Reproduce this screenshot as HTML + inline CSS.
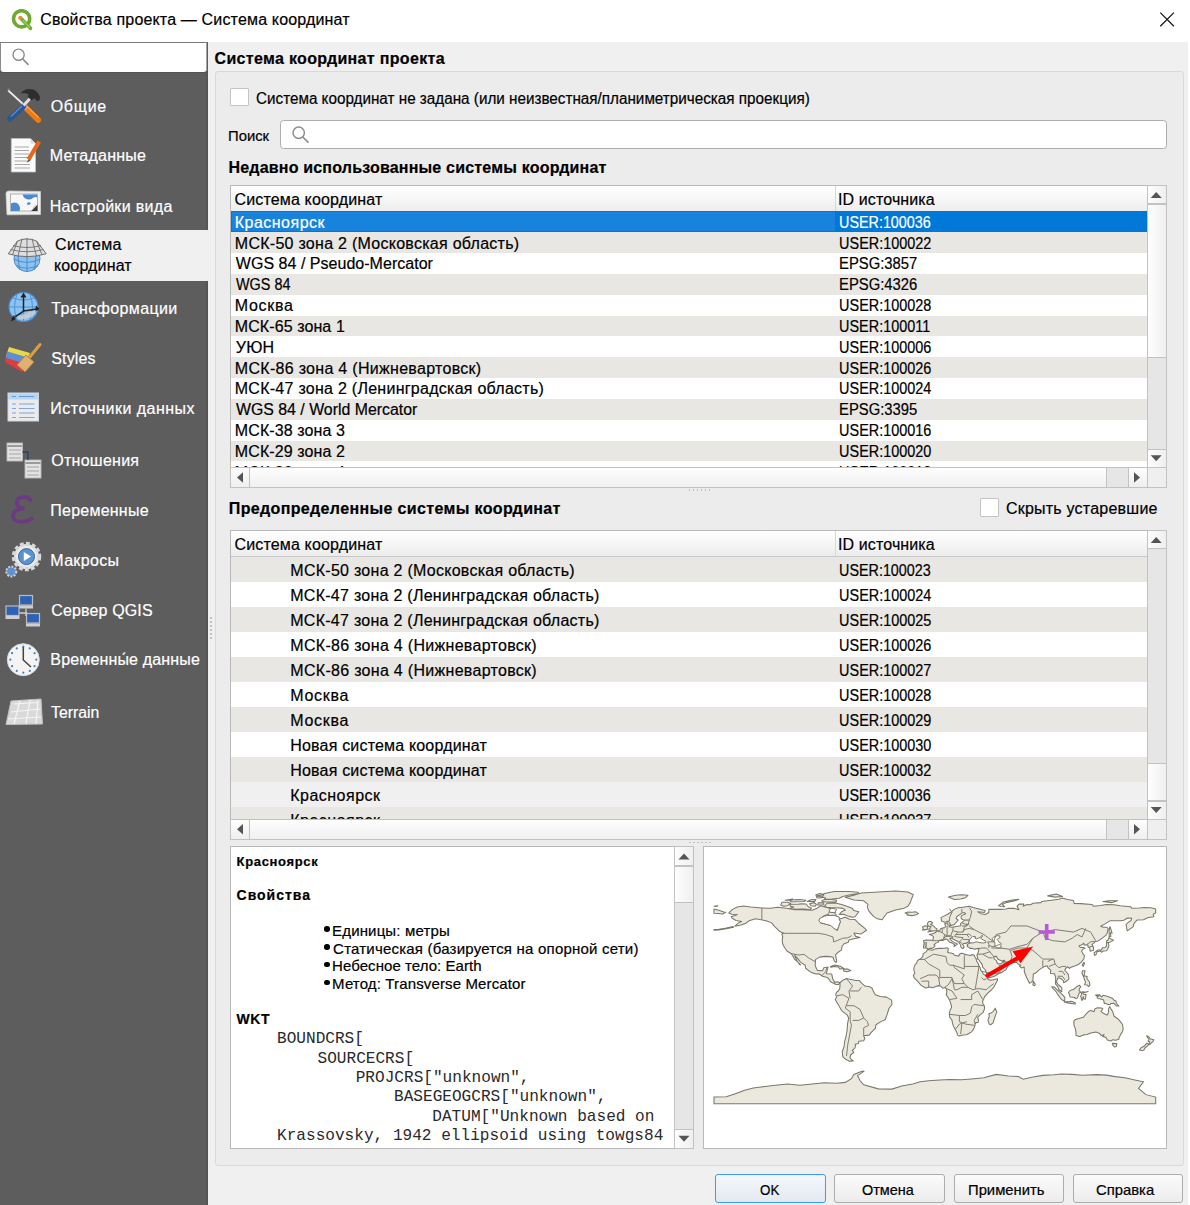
<!DOCTYPE html>
<html><head><meta charset="utf-8"><title>QGIS</title>
<style>
html,body{margin:0;padding:0;}
body{width:1190px;height:1205px;overflow:hidden;position:relative;background:#fff;font-family:"Liberation Sans",sans-serif;font-size:15px;color:#000;}
.t{position:absolute;white-space:pre;line-height:20px;font-size:16px;-webkit-text-stroke:0.2px currentColor;}
</style></head><body>
<div style="position:absolute;left:0.00px;top:0.00px;width:1190.00px;height:41.50px;background:#fff"></div><svg style="position:absolute;left:11px;top:9px" width="24" height="22" viewBox="0 0 24 22">
<circle cx="10.6" cy="9.8" r="8.1" fill="none" stroke="#6fa832" stroke-width="3.6"/>
<path d="M10.5 10 L19.5 19.3" stroke="#6fa832" stroke-width="3.6" stroke-linecap="round"/>
<path d="M12 11.5 L18.5 18.3" stroke="#9acd5a" stroke-width="1.4" stroke-linecap="round"/>
<circle cx="9.3" cy="8.9" r="2.1" fill="#f08a2c"/>
</svg><div class="t" style="left:40.30px;top:10.10px;letter-spacing:0.165px;">Свойства проекта — Система координат</div><svg style="position:absolute;left:1158px;top:11px" width="18" height="18" viewBox="0 0 18 18"><path d="M2.3 1.6 L15.9 15.2 M15.9 1.6 L2.3 15.2" stroke="#1a1a1a" stroke-width="1.3" fill="none"/></svg><div style="position:absolute;left:0.00px;top:41.50px;width:208.00px;height:1163.50px;background:#5d5d5d"></div><div style="position:absolute;left:0.00px;top:71.30px;width:207.80px;height:1.70px;background:#535353"></div><div style="position:absolute;left:0.00px;top:42.00px;width:207.00px;height:29.50px;background:#fff;border-top:1px solid #7a7a7a;border-left:1px solid #8a8a8a;border-right:1px solid #a5a5a5;border-bottom-right-radius:3px;border-bottom-left-radius:3px;box-sizing:border-box"></div><svg style="position:absolute;left:10px;top:47px" width="22" height="22" viewBox="0 0 22 22"><circle cx="8.6" cy="7.7" r="5.6" stroke="#8a8a8a" stroke-width="1.4" fill="none"/><path d="M12.6 11.8 L18 17.4" stroke="#8a8a8a" stroke-width="1.6" stroke-linecap="round"/></svg><div style="position:absolute;left:205.80px;top:71.30px;width:2.00px;height:1133.70px;background:#555"></div><div style="position:absolute;left:0.00px;top:230.00px;width:208.00px;height:50.50px;background:#f0f0f0"></div><div class="t" style="left:50.70px;top:96.60px;color:#fff;letter-spacing:0.722px;">Общие</div><div class="t" style="left:49.70px;top:146.30px;color:#fff;letter-spacing:0.219px;">Метаданные</div><div class="t" style="left:49.70px;top:196.60px;color:#fff;letter-spacing:0.310px;">Настройки вида</div><div class="t" style="left:51.30px;top:299.20px;color:#fff;letter-spacing:0.378px;">Трансформации</div><div class="t" style="left:51.30px;top:348.70px;color:#fff;letter-spacing:0.135px;">Styles</div><div class="t" style="left:50.30px;top:398.60px;color:#fff;letter-spacing:0.480px;">Источники данных</div><div class="t" style="left:51.30px;top:451.30px;color:#fff;letter-spacing:0.257px;">Отношения</div><div class="t" style="left:50.30px;top:501.10px;color:#fff;letter-spacing:0.231px;">Переменные</div><div class="t" style="left:50.30px;top:551.20px;color:#fff;letter-spacing:0.329px;">Макросы</div><div class="t" style="left:51.30px;top:600.80px;color:#fff;letter-spacing:0.134px;">Сервер QGIS</div><div class="t" style="left:50.30px;top:650.30px;color:#fff;letter-spacing:0.157px;">Временны́е данные</div><div class="t" style="left:51.30px;top:703.30px;color:#fff;transform:scaleX(0.9873);transform-origin:0.00px 0;">Terrain</div><div class="t" style="left:55.00px;top:234.70px;letter-spacing:0.336px;">Система</div><div class="t" style="left:54.00px;top:255.90px;letter-spacing:0.147px;">координат</div><svg style="position:absolute;left:0;top:0" width="60" height="740" viewBox="0 0 60 740"><path d="M8.2 90.5 L23.5 104.5" stroke="#ececec" stroke-width="1.7"/><path d="M7.6 89.8 L9.6 89" stroke="#8a8a8a" stroke-width="1.4"/><path d="M24.5 106.5 L38.2 120" stroke="#f07a10" stroke-width="5.8" stroke-linecap="round"/><path d="M26 105.5 L38.5 117.5" stroke="#ffa040" stroke-width="1.2"/><path d="M22 104 L26.5 108.5" stroke="#d0d0d0" stroke-width="3.6"/><path d="M23.5 106.5 L10 118.8" stroke="#2b5593" stroke-width="5.6" stroke-linecap="round"/><path d="M22 106 L11 116.5" stroke="#5d8fd0" stroke-width="1.3"/><path d="M23.5 105.5 L30.5 98" stroke="#e0e0e0" stroke-width="3"/><path d="M20.5 93.5 Q25 87.5 33 89.5 Q38 91 40 97 L39.5 100.5 L36.5 101 L34.5 98 L31.5 100.5 L27.5 96.5 L29 94.5 Q25 92 20.5 93.5 Z" fill="#2e2e2e"/><path d="M11.3 138.5 L30.5 138.5 L35.5 143.5 L35.5 172 L11.3 172 Z" fill="#fafafa" stroke="#bfbfbf" stroke-width="0.8"/><path d="M30.5 138.5 L30.5 143.5 L35.5 143.5" fill="#dcdcdc"/><path d="M14.5 147 L29 147" stroke="#a8a8a8" stroke-width="1"/><path d="M14.5 150.5 L29 150.5" stroke="#a8a8a8" stroke-width="1"/><path d="M14.5 154 L29 154" stroke="#a8a8a8" stroke-width="1"/><path d="M14.5 157.5 L29 157.5" stroke="#a8a8a8" stroke-width="1"/><path d="M14.5 161 L29 161" stroke="#a8a8a8" stroke-width="1"/><path d="M14.5 164.5 L30 164.5" stroke="#a8a8a8" stroke-width="1"/><path d="M14.5 168 L30 168" stroke="#a8a8a8" stroke-width="1"/><path d="M39.2 141.5 L28.5 159.5" stroke="#e8671a" stroke-width="4.2" stroke-linecap="butt"/><path d="M26.5 162.8 L28.6 159.2 L30.7 160.5 Z" fill="#555"/><path d="M6 193.5 Q6 191 9 191 L40.5 191.5 L40.5 214.5 L7 214.8 Z" fill="#eeeeee" stroke="#cfcfcf" stroke-width="0.8"/><rect x="10.5" y="194" width="27" height="17" fill="#f8f8f8" stroke="#a0a0a0" stroke-width="0.8"/><path d="M11 203.5 Q16 201 19 205 Q21 208 19.5 211 L11 211 Z" fill="#4a8ad4"/><path d="M22.5 194.5 Q24 199 28 199.5 Q31 199.8 33 198 Q35 196.5 37 197.5 L37 194.5 Z" fill="#4a8ad4"/><path d="M27 203 Q29 201.5 31 203 Q30 205.5 27.5 205 Z" fill="#4a8ad4"/><path d="M31 211 L37.5 204.5 L37.5 211 Z" fill="#3a3a3a"/><path d="M31 211 L37.5 204.5 L34 205.5 Z" fill="#d9d9d9"/><circle cx="27" cy="258.5" r="13" fill="#8cc2ee" stroke="#4a88cc" stroke-width="1"/><path d="M14 259 Q27 266 40 259 M16 265.5 Q27 271 38 265.5 M27 245 L27 271.5 M20 247 Q16.5 258 20 270 M34 247 Q37.5 258 34 270" stroke="#4f8fd4" stroke-width="1.1" fill="none"/><path d="M8.3 253.8 L17.5 241 Q27 236.8 36.5 241 L46.2 253.8 Q27 259.5 8.3 253.8 Z" fill="#dedede" stroke="#6e6e6e" stroke-width="1"/><path d="M13 245.5 Q27 249.5 41 245.5 M10.5 249.5 Q27 254 43.5 249.5 M27 238 L27 257 M22 238.8 L18 256.2 M32 238.8 L36.5 256.2 M17.5 241 L12.5 254.8 M36.5 241 L42 254.8" stroke="#6e6e6e" stroke-width="0.9" fill="none"/><circle cx="23.5" cy="307" r="14.5" fill="#8cc3ef" stroke="#4a8bd0" stroke-width="1.1"/><path d="M9 307 L38 307 M23.5 292.5 L23.5 321.5 M13 298 Q23.5 302 34 298 M13 316 Q23.5 312 34 316 M17 294.5 Q12 307 17 319.5 M30 294.5 Q35 307 30 319.5" stroke="#4f93d8" stroke-width="1" fill="none"/><path d="M23.5 295 L23.5 311 L12 319 M23.5 311 L37 309" stroke="#222" stroke-width="1.5" fill="none"/><path d="M20.5 297.5 L23.5 292.5 L26.5 297.5 Z M11 321.5 L13 315.5 L16 319 Z M36 305.5 L39.5 309 L35 311.5 Z" fill="#222"/><path d="M16 318 Q25 313 36 310 L33 316 Q24 321 16 318 Z" fill="#cfcfcf" opacity="0.85"/><path d="M9 347 L30 353 L26 362 L6 356 Z" fill="#e8d94a"/><path d="M7.5 351.5 L28 357.5 L25 364 L5.5 358 Z" fill="#5f8fd0"/><path d="M5.5 358 L25 364 L22 372 L5 362 Z" fill="#e23b3b"/><path d="M40 344.5 L29 358" stroke="#d8a040" stroke-width="3" stroke-linecap="round"/><path d="M17 365 L26 355 L34 362 L25 372 Z" fill="#e0b070" stroke="#b07c38" stroke-width="0.8"/><rect x="8" y="393" width="30.5" height="28" fill="#ebebeb" stroke="#c9d6e6" stroke-width="1"/><rect x="8.5" y="393.5" width="29.5" height="6" fill="#b5d5f3"/><path d="M12 396.5 L16 396.5 M19 396.5 L34 396.5" stroke="#6a9ad6" stroke-width="1.1"/><path d="M12 404 L16 404 M19 404 L34.5 404" stroke="#7fa7d8" stroke-width="1.1"/><path d="M12 408.5 L16 408.5 M19 408.5 L34.5 408.5" stroke="#7fa7d8" stroke-width="1.1"/><path d="M12 413 L16 413 M19 413 L34.5 413" stroke="#7fa7d8" stroke-width="1.1"/><path d="M12 417.5 L16 417.5 M19 417.5 L34.5 417.5" stroke="#7fa7d8" stroke-width="1.1"/><rect x="7" y="443" width="15.5" height="18" fill="#e2e2e2" stroke="#b9b9b9" stroke-width="0.9"/><rect x="25" y="460" width="16" height="18" fill="#e2e2e2" stroke="#b9b9b9" stroke-width="0.9"/><path d="M7.5 446 L22 446 M25.5 463 L40.5 463" stroke="#9a9a9a" stroke-width="2"/><path d="M9 450 L21 450" stroke="#a5a5a5" stroke-width="1"/><path d="M9 454 L21 454" stroke="#a5a5a5" stroke-width="1"/><path d="M9 458 L21 458" stroke="#a5a5a5" stroke-width="1"/><path d="M27 467 L39 467" stroke="#a5a5a5" stroke-width="1"/><path d="M27 471 L39 471" stroke="#a5a5a5" stroke-width="1"/><path d="M27 475 L39 475" stroke="#a5a5a5" stroke-width="1"/><path d="M22.5 452 L28 452 L28 460" stroke="#2d3f66" stroke-width="1.3" fill="none"/><path d="M30.5 499.8 C27.5 495.8 16.5 496.2 16.8 502.3 C17.1 507 21.5 508.6 24.5 508.6 C17 508.6 12.8 511.8 13 516 C13.3 522.3 23.5 524 31.5 518.8" stroke="#6b3a82" stroke-width="3.8" fill="none" stroke-linecap="round"/><circle cx="26.5" cy="556.6" r="12.5" fill="#e4e4e4" stroke="#d8d8d8" stroke-width="4.5" stroke-dasharray="3.6 2.2"/><circle cx="26.5" cy="556.6" r="10.5" fill="#ececec"/><circle cx="26.5" cy="556.6" r="8" fill="#5a93d0" stroke="#2f6aad" stroke-width="1"/><path d="M23.8 552.1 L31 556.6 L23.8 561.1 Z" fill="#fff"/><circle cx="11.3" cy="571.5" r="5" fill="#5a93d0" stroke="#d0d0d0" stroke-width="2" stroke-dasharray="2 1.3"/><rect x="19.5" y="595.5" width="13" height="9.5" fill="#2f62b5" stroke="#bcbcbc" stroke-width="1.2"/><rect x="19.0" y="605.5" width="14" height="3" fill="#cfcfcf"/><rect x="6" y="606" width="13" height="9.5" fill="#2f62b5" stroke="#bcbcbc" stroke-width="1.2"/><rect x="5.5" y="616" width="14" height="3" fill="#cfcfcf"/><rect x="26.5" y="613.5" width="13" height="9.5" fill="#2f62b5" stroke="#bcbcbc" stroke-width="1.2"/><rect x="26.0" y="623.5" width="14" height="3" fill="#cfcfcf"/><path d="M26 608.5 L26 616 M19.5 613 L27 613" stroke="#cfcfcf" stroke-width="1.3"/><circle cx="23.3" cy="659.7" r="16" fill="#f4f4f4" stroke="#d8d8d8" stroke-width="1"/><circle cx="23.30" cy="646.70" r="1.1" fill="#4a7fc4"/><circle cx="29.80" cy="648.44" r="1.1" fill="#4a7fc4"/><circle cx="34.56" cy="653.20" r="1.1" fill="#4a7fc4"/><circle cx="36.30" cy="659.70" r="1.1" fill="#4a7fc4"/><circle cx="34.56" cy="666.20" r="1.1" fill="#4a7fc4"/><circle cx="29.80" cy="670.96" r="1.1" fill="#4a7fc4"/><circle cx="23.30" cy="672.70" r="1.1" fill="#4a7fc4"/><circle cx="16.80" cy="670.96" r="1.1" fill="#4a7fc4"/><circle cx="12.04" cy="666.20" r="1.1" fill="#4a7fc4"/><circle cx="10.30" cy="659.70" r="1.1" fill="#4a7fc4"/><circle cx="12.04" cy="653.20" r="1.1" fill="#4a7fc4"/><circle cx="16.80" cy="648.44" r="1.1" fill="#4a7fc4"/><path d="M23.3 647 L23.3 660 L31 667" stroke="#444" stroke-width="1.5" fill="none"/><path d="M11 701 L41 699 L42.5 724 L6 724.5 Z" fill="#d9d9d9" stroke="#c0c0c0" stroke-width="1"/><path d="M14 704 L38 702.5 M11 712 L40 709 M8 719 L41 717 M20 700.5 L14 724 M30 700 L26 724 M38 700 L36 724" stroke="#f5f5f5" stroke-width="1.2" fill="none"/></svg><div style="position:absolute;left:208.00px;top:41.50px;width:980.00px;height:1163.50px;background:#f0f0f0"></div><div style="position:absolute;left:210.20px;top:617.00px;width:1.60px;height:1.60px;background:#c4c4c4"></div><div style="position:absolute;left:210.20px;top:621.00px;width:1.60px;height:1.60px;background:#c4c4c4"></div><div style="position:absolute;left:210.20px;top:625.00px;width:1.60px;height:1.60px;background:#c4c4c4"></div><div style="position:absolute;left:210.20px;top:629.00px;width:1.60px;height:1.60px;background:#c4c4c4"></div><div style="position:absolute;left:210.20px;top:633.00px;width:1.60px;height:1.60px;background:#c4c4c4"></div><div style="position:absolute;left:210.20px;top:637.00px;width:1.60px;height:1.60px;background:#c4c4c4"></div><div class="t" style="left:214.50px;top:48.70px;font-weight:bold;letter-spacing:0.330px;">Система координат проекта</div><div style="position:absolute;left:215.00px;top:71.00px;width:968.60px;height:1095.00px;background:#ececec;border:1px solid #d9d9d9;border-radius:3px;box-sizing:border-box"></div><div style="position:absolute;left:230.20px;top:87.60px;width:18.80px;height:18.80px;background:#fff;border:1.3px solid #c4c4c4;border-radius:1px;box-sizing:border-box"></div><div class="t" style="left:255.50px;top:88.70px;transform:scaleX(0.9526);transform-origin:0.00px 0;">Система координат не задана (или неизвестная/планиметрическая проекция)</div><div class="t" style="left:228.10px;top:126.10px;font-size:15px;transform:scaleX(0.9877);transform-origin:1.00px 0;">Поиск</div><div style="position:absolute;left:280.20px;top:119.60px;width:886.80px;height:29.80px;background:#fff;border:1.2px solid #adadad;border-radius:3.5px;box-sizing:border-box"></div><svg style="position:absolute;left:290px;top:124px" width="22" height="22" viewBox="0 0 22 22"><circle cx="8.7" cy="8.8" r="5.7" stroke="#8c8c8c" stroke-width="1.5" fill="none"/><path d="M12.8 13 L18 18.2" stroke="#8c8c8c" stroke-width="1.7" stroke-linecap="round"/></svg><div class="t" style="left:228.50px;top:157.70px;font-weight:bold;letter-spacing:0.191px;">Недавно использованные системы координат</div><div style="position:absolute;left:230.20px;top:185.00px;width:936.60px;height:302.80px;background:#fff;border:1px solid #b9b9b9;box-sizing:border-box"></div><div style="position:absolute;left:231.20px;top:186.00px;width:915.80px;height:26.50px;background:linear-gradient(180deg,#ffffff 0%,#f7f7f7 45%,#ebebeb 100%);"></div><div style="position:absolute;left:231.20px;top:211.50px;width:915.80px;height:1.00px;background:#c8c8c8"></div><div style="position:absolute;left:834.50px;top:186.00px;width:1.00px;height:25.50px;background:#d8d8d8"></div><div style="position:absolute;left:231.20px;top:211.40px;width:915.80px;height:255.90px;overflow:hidden"><div style="position:absolute;left:0.00px;top:0.00px;width:915.80px;height:20.83px;background:#0078d7"></div><div style="position:absolute;left:1.00px;top:1.00px;width:602.80px;height:18.83px;background:#1883dc"></div><div class="t" style="left:3.60px;top:1.40px;color:#fff;letter-spacing:0.476px;">Красноярск</div><div class="t" style="left:608.10px;top:1.40px;color:#fff;transform:scaleX(0.8955);transform-origin:1.00px 0;">USER:100036</div><div style="position:absolute;left:0.00px;top:20.83px;width:915.80px;height:20.83px;background:#e9e7e3"></div><div class="t" style="left:3.60px;top:22.23px;letter-spacing:0.270px;">МСК-50 зона 2 (Московская область)</div><div class="t" style="left:608.10px;top:22.23px;transform:scaleX(0.9011);transform-origin:1.00px 0;">USER:100022</div><div class="t" style="left:4.60px;top:43.07px;letter-spacing:0.027px;">WGS 84 / Pseudo-Mercator</div><div class="t" style="left:608.10px;top:43.07px;transform:scaleX(0.9247);transform-origin:1.00px 0;">EPSG:3857</div><div style="position:absolute;left:0.00px;top:62.50px;width:915.80px;height:20.83px;background:#e9e7e3"></div><div class="t" style="left:4.60px;top:63.90px;transform:scaleX(0.8999);transform-origin:0.00px 0;">WGS 84</div><div class="t" style="left:608.10px;top:63.90px;transform:scaleX(0.9247);transform-origin:1.00px 0;">EPSG:4326</div><div class="t" style="left:3.60px;top:84.73px;letter-spacing:0.695px;">Москва</div><div class="t" style="left:608.10px;top:84.73px;transform:scaleX(0.9011);transform-origin:1.00px 0;">USER:100028</div><div style="position:absolute;left:0.00px;top:104.16px;width:915.80px;height:20.83px;background:#e9e7e3"></div><div class="t" style="left:3.60px;top:105.56px;letter-spacing:0.091px;">МСК-65 зона 1</div><div class="t" style="left:608.10px;top:105.56px;transform:scaleX(0.9007);transform-origin:1.00px 0;">USER:100011</div><div class="t" style="left:4.60px;top:126.40px;letter-spacing:0.236px;">УЮН</div><div class="t" style="left:608.10px;top:126.40px;transform:scaleX(0.9011);transform-origin:1.00px 0;">USER:100006</div><div style="position:absolute;left:0.00px;top:145.83px;width:915.80px;height:20.83px;background:#e9e7e3"></div><div class="t" style="left:3.60px;top:147.23px;letter-spacing:0.298px;">МСК-86 зона 4 (Нижневартовск)</div><div class="t" style="left:608.10px;top:147.23px;transform:scaleX(0.9011);transform-origin:1.00px 0;">USER:100026</div><div class="t" style="left:3.60px;top:168.06px;letter-spacing:0.263px;">МСК-47 зона 2 (Ленинградская область)</div><div class="t" style="left:608.10px;top:168.06px;transform:scaleX(0.9011);transform-origin:1.00px 0;">USER:100024</div><div style="position:absolute;left:0.00px;top:187.50px;width:915.80px;height:20.83px;background:#e9e7e3"></div><div class="t" style="left:4.60px;top:188.90px;transform:scaleX(0.9914);transform-origin:0.00px 0;">WGS 84 / World Mercator</div><div class="t" style="left:608.10px;top:188.90px;transform:scaleX(0.9247);transform-origin:1.00px 0;">EPSG:3395</div><div class="t" style="left:3.60px;top:209.73px;letter-spacing:0.108px;">МСК-38 зона 3</div><div class="t" style="left:608.10px;top:209.73px;transform:scaleX(0.9011);transform-origin:1.00px 0;">USER:100016</div><div style="position:absolute;left:0.00px;top:229.16px;width:915.80px;height:20.83px;background:#e9e7e3"></div><div class="t" style="left:3.60px;top:230.56px;letter-spacing:0.108px;">МСК-29 зона 2</div><div class="t" style="left:608.10px;top:230.56px;transform:scaleX(0.9011);transform-origin:1.00px 0;">USER:100020</div><div class="t" style="left:3.60px;top:251.40px;letter-spacing:0.108px;">МСК-30 зона 4</div><div class="t" style="left:608.10px;top:251.40px;transform:scaleX(0.9011);transform-origin:1.00px 0;">USER:100013</div></div><div class="t" style="left:234.60px;top:190.10px;letter-spacing:0.141px;">Система координат</div><div class="t" style="left:838.00px;top:190.10px;letter-spacing:0.116px;">ID источника</div><div style="position:absolute;left:1146.50px;top:185.00px;width:20.30px;height:283.30px;background:#e6e6e6;border:1px solid #c2c2c2;box-sizing:border-box"></div><div style="position:absolute;left:1146.50px;top:185.00px;width:20.30px;height:19.00px;background:linear-gradient(90deg,#fdfdfd,#efefef);border:1px solid #c2c2c2;box-sizing:border-box"></div><div style="position:absolute;left:1146.50px;top:449.30px;width:20.30px;height:19.00px;background:linear-gradient(90deg,#fdfdfd,#efefef);border:1px solid #c2c2c2;box-sizing:border-box"></div><div style="position:absolute;left:1146.50px;top:204.30px;width:20.30px;height:154.00px;background:linear-gradient(90deg,#fefefe,#f0f0f0);border:1px solid #c2c2c2;box-sizing:border-box"></div><div style="position:absolute;left:230.20px;top:467.30px;width:917.30px;height:20.50px;background:#e6e6e6;border:1px solid #c2c2c2;box-sizing:border-box"></div><div style="position:absolute;left:230.20px;top:467.30px;width:19.50px;height:20.50px;background:linear-gradient(180deg,#fdfdfd,#efefef);border:1px solid #c2c2c2;box-sizing:border-box"></div><div style="position:absolute;left:1128.00px;top:467.30px;width:19.50px;height:20.50px;background:linear-gradient(180deg,#fdfdfd,#efefef);border:1px solid #c2c2c2;box-sizing:border-box"></div><div style="position:absolute;left:249.20px;top:467.30px;width:858.10px;height:20.50px;background:linear-gradient(180deg,#fefefe,#f0f0f0);border:1px solid #c2c2c2;box-sizing:border-box"></div><div style="position:absolute;left:1146.50px;top:467.30px;width:20.30px;height:20.50px;background:#efefef;border:1px solid #c2c2c2;box-sizing:border-box"></div><svg style="position:absolute;left:0;top:0;overflow:visible" width="1" height="1"><polygon points="1150.7,198.0 1161.7,198.0 1156.2,192.0" fill="#555"/><polygon points="1150.7,455.3 1161.7,455.3 1156.2,461.3" fill="#555"/><polygon points="243.0,472.3 243.0,482.8 237.0,477.55" fill="#555"/><polygon points="1134.0,472.3 1134.0,482.8 1140.0,477.55" fill="#555"/></svg><div style="position:absolute;left:688.70px;top:489.40px;width:1.60px;height:1.60px;background:#c0c0c0"></div><div style="position:absolute;left:692.70px;top:489.40px;width:1.60px;height:1.60px;background:#c0c0c0"></div><div style="position:absolute;left:696.70px;top:489.40px;width:1.60px;height:1.60px;background:#c0c0c0"></div><div style="position:absolute;left:700.70px;top:489.40px;width:1.60px;height:1.60px;background:#c0c0c0"></div><div style="position:absolute;left:704.70px;top:489.40px;width:1.60px;height:1.60px;background:#c0c0c0"></div><div style="position:absolute;left:708.70px;top:489.40px;width:1.60px;height:1.60px;background:#c0c0c0"></div><div class="t" style="left:228.80px;top:499.10px;font-weight:bold;letter-spacing:0.356px;">Предопределенные системы координат</div><div style="position:absolute;left:980.30px;top:498.00px;width:18.90px;height:18.70px;background:#fff;border:1.3px solid #c4c4c4;border-radius:1px;box-sizing:border-box"></div><div class="t" style="left:1005.90px;top:499.30px;letter-spacing:0.231px;">Скрыть устаревшие</div><div style="position:absolute;left:230.20px;top:530.00px;width:936.60px;height:309.50px;background:#fff;border:1px solid #b9b9b9;box-sizing:border-box"></div><div style="position:absolute;left:231.20px;top:531.00px;width:915.80px;height:26.00px;background:linear-gradient(180deg,#ffffff 0%,#f7f7f7 45%,#ebebeb 100%);"></div><div style="position:absolute;left:231.20px;top:556.00px;width:915.80px;height:1.00px;background:#c8c8c8"></div><div style="position:absolute;left:834.50px;top:531.00px;width:1.00px;height:25.00px;background:#d8d8d8"></div><div style="position:absolute;left:231.20px;top:556.80px;width:915.80px;height:262.20px;overflow:hidden"><div style="position:absolute;left:0.00px;top:0.00px;width:915.80px;height:25.00px;background:#e9e7e3"></div><div class="t" style="left:59.10px;top:4.30px;letter-spacing:0.270px;">МСК-50 зона 2 (Московская область)</div><div class="t" style="left:607.70px;top:4.30px;transform:scaleX(0.8955);transform-origin:1.00px 0;">USER:100023</div><div class="t" style="left:59.10px;top:29.30px;letter-spacing:0.263px;">МСК-47 зона 2 (Ленинградская область)</div><div class="t" style="left:607.70px;top:29.30px;transform:scaleX(0.9011);transform-origin:1.00px 0;">USER:100024</div><div style="position:absolute;left:0.00px;top:50.00px;width:915.80px;height:25.00px;background:#e9e7e3"></div><div class="t" style="left:59.10px;top:54.30px;letter-spacing:0.263px;">МСК-47 зона 2 (Ленинградская область)</div><div class="t" style="left:607.70px;top:54.30px;transform:scaleX(0.9011);transform-origin:1.00px 0;">USER:100025</div><div class="t" style="left:59.10px;top:79.30px;letter-spacing:0.298px;">МСК-86 зона 4 (Нижневартовск)</div><div class="t" style="left:607.70px;top:79.30px;transform:scaleX(0.9011);transform-origin:1.00px 0;">USER:100026</div><div style="position:absolute;left:0.00px;top:100.00px;width:915.80px;height:25.00px;background:#e9e7e3"></div><div class="t" style="left:59.10px;top:104.30px;letter-spacing:0.298px;">МСК-86 зона 4 (Нижневартовск)</div><div class="t" style="left:607.70px;top:104.30px;transform:scaleX(0.9011);transform-origin:1.00px 0;">USER:100027</div><div class="t" style="left:59.10px;top:129.30px;letter-spacing:0.695px;">Москва</div><div class="t" style="left:607.70px;top:129.30px;transform:scaleX(0.9011);transform-origin:1.00px 0;">USER:100028</div><div style="position:absolute;left:0.00px;top:150.00px;width:915.80px;height:25.00px;background:#e9e7e3"></div><div class="t" style="left:59.10px;top:154.30px;letter-spacing:0.695px;">Москва</div><div class="t" style="left:607.70px;top:154.30px;transform:scaleX(0.9011);transform-origin:1.00px 0;">USER:100029</div><div class="t" style="left:59.10px;top:179.30px;letter-spacing:0.181px;">Новая система координат</div><div class="t" style="left:607.70px;top:179.30px;transform:scaleX(0.9011);transform-origin:1.00px 0;">USER:100030</div><div style="position:absolute;left:0.00px;top:200.00px;width:915.80px;height:25.00px;background:#e9e7e3"></div><div class="t" style="left:59.10px;top:204.30px;letter-spacing:0.181px;">Новая система координат</div><div class="t" style="left:607.70px;top:204.30px;transform:scaleX(0.9011);transform-origin:1.00px 0;">USER:100032</div><div style="position:absolute;left:0.00px;top:225.00px;width:915.80px;height:25.00px;background:#f0f0f0"></div><div class="t" style="left:59.10px;top:229.30px;letter-spacing:0.476px;">Красноярск</div><div class="t" style="left:607.70px;top:229.30px;transform:scaleX(0.8955);transform-origin:1.00px 0;">USER:100036</div><div style="position:absolute;left:0.00px;top:250.00px;width:915.80px;height:25.00px;background:#e9e7e3"></div><div class="t" style="left:59.10px;top:254.30px;letter-spacing:0.476px;">Красноярск</div><div class="t" style="left:607.70px;top:254.30px;transform:scaleX(0.9011);transform-origin:1.00px 0;">USER:100037</div></div><div class="t" style="left:234.60px;top:534.60px;letter-spacing:0.141px;">Система координат</div><div class="t" style="left:838.00px;top:534.60px;letter-spacing:0.116px;">ID источника</div><div style="position:absolute;left:1146.50px;top:530.00px;width:20.30px;height:290.00px;background:#e6e6e6;border:1px solid #c2c2c2;box-sizing:border-box"></div><div style="position:absolute;left:1146.50px;top:530.00px;width:20.30px;height:19.00px;background:linear-gradient(90deg,#fdfdfd,#efefef);border:1px solid #c2c2c2;box-sizing:border-box"></div><div style="position:absolute;left:1146.50px;top:801.00px;width:20.30px;height:19.00px;background:linear-gradient(90deg,#fdfdfd,#efefef);border:1px solid #c2c2c2;box-sizing:border-box"></div><div style="position:absolute;left:1146.50px;top:762.70px;width:20.30px;height:38.10px;background:linear-gradient(90deg,#fefefe,#f0f0f0);border:1px solid #c2c2c2;box-sizing:border-box"></div><div style="position:absolute;left:230.20px;top:819.00px;width:917.30px;height:20.50px;background:#e6e6e6;border:1px solid #c2c2c2;box-sizing:border-box"></div><div style="position:absolute;left:230.20px;top:819.00px;width:19.50px;height:20.50px;background:linear-gradient(180deg,#fdfdfd,#efefef);border:1px solid #c2c2c2;box-sizing:border-box"></div><div style="position:absolute;left:1128.00px;top:819.00px;width:19.50px;height:20.50px;background:linear-gradient(180deg,#fdfdfd,#efefef);border:1px solid #c2c2c2;box-sizing:border-box"></div><div style="position:absolute;left:249.20px;top:819.00px;width:858.10px;height:20.50px;background:linear-gradient(180deg,#fefefe,#f0f0f0);border:1px solid #c2c2c2;box-sizing:border-box"></div><div style="position:absolute;left:1146.50px;top:819.00px;width:20.30px;height:20.50px;background:#efefef;border:1px solid #c2c2c2;box-sizing:border-box"></div><svg style="position:absolute;left:0;top:0;overflow:visible" width="1" height="1"><polygon points="1150.7,543.0 1161.7,543.0 1156.2,537.0" fill="#555"/><polygon points="1150.7,807.0 1161.7,807.0 1156.2,813.0" fill="#555"/><polygon points="243.0,824.0 243.0,834.5 237.0,829.25" fill="#555"/><polygon points="1134.0,824.0 1134.0,834.5 1140.0,829.25" fill="#555"/></svg><div style="position:absolute;left:689.00px;top:841.50px;width:1.50px;height:1.50px;background:#c4c4c4"></div><div style="position:absolute;left:693.00px;top:841.50px;width:1.50px;height:1.50px;background:#c4c4c4"></div><div style="position:absolute;left:697.00px;top:841.50px;width:1.50px;height:1.50px;background:#c4c4c4"></div><div style="position:absolute;left:701.00px;top:841.50px;width:1.50px;height:1.50px;background:#c4c4c4"></div><div style="position:absolute;left:705.00px;top:841.50px;width:1.50px;height:1.50px;background:#c4c4c4"></div><div style="position:absolute;left:709.00px;top:841.50px;width:1.50px;height:1.50px;background:#c4c4c4"></div><div style="position:absolute;left:230.20px;top:846.20px;width:464.00px;height:302.60px;background:#fff;border:1px solid #b9b9b9;box-sizing:border-box"></div><div style="position:absolute;left:0.00px;top:0.00px;width:1190.00px;height:1205.00px;overflow:hidden;clip-path:inset(847px 497px 57px 231px)"><div class="t" style="left:236.60px;top:852.20px;font-size:13px;font-weight:bold;letter-spacing:0.654px;">Красноярск</div><div class="t" style="left:236.60px;top:885.20px;font-size:14px;font-weight:bold;letter-spacing:0.978px;">Свойства</div><div class="t" style="left:332.10px;top:920.80px;font-size:15px;letter-spacing:0.148px;">Единицы: метры</div><div class="t" style="left:333.10px;top:938.60px;font-size:15px;letter-spacing:0.208px;">Статическая (базируется на опорной сети)</div><div class="t" style="left:332.10px;top:956.30px;font-size:15px;letter-spacing:0.060px;">Небесное тело: Earth</div><div class="t" style="left:332.10px;top:974.20px;font-size:15px;letter-spacing:0.135px;">Метод: Transverse Mercator</div><div class="t" style="left:236.50px;top:1009.20px;font-size:14px;font-weight:bold;letter-spacing:0.630px;">WKT</div><div class="t" style="left:277.00px;top:1029.11px;font-size:16.1px;color:#2a2a2a;font-family:'Liberation Mono',monospace;-webkit-text-stroke:0;">BOUNDCRS[</div><div class="t" style="left:317.50px;top:1048.51px;font-size:16.1px;color:#2a2a2a;font-family:'Liberation Mono',monospace;-webkit-text-stroke:0;">SOURCECRS[</div><div class="t" style="left:355.70px;top:1067.91px;font-size:16.1px;color:#2a2a2a;font-family:'Liberation Mono',monospace;-webkit-text-stroke:0;">PROJCRS[&quot;unknown&quot;,</div><div class="t" style="left:394.00px;top:1087.31px;font-size:16.1px;color:#2a2a2a;font-family:'Liberation Mono',monospace;-webkit-text-stroke:0;">BASEGEOGCRS[&quot;unknown&quot;,</div><div class="t" style="left:432.30px;top:1106.71px;font-size:16.1px;color:#2a2a2a;font-family:'Liberation Mono',monospace;-webkit-text-stroke:0;">DATUM[&quot;Unknown based on</div><div class="t" style="left:277.00px;top:1126.11px;font-size:16.1px;color:#2a2a2a;font-family:'Liberation Mono',monospace;-webkit-text-stroke:0;">Krassovsky, 1942 ellipsoid using towgs84</div><div style="position:absolute;left:324.30px;top:926.20px;width:5.60px;height:5.60px;background:#000;border-radius:50%"></div><div style="position:absolute;left:324.30px;top:944.00px;width:5.60px;height:5.60px;background:#000;border-radius:50%"></div><div style="position:absolute;left:324.30px;top:961.70px;width:5.60px;height:5.60px;background:#000;border-radius:50%"></div><div style="position:absolute;left:324.30px;top:979.60px;width:5.60px;height:5.60px;background:#000;border-radius:50%"></div></div><div style="position:absolute;left:673.80px;top:846.20px;width:20.40px;height:302.60px;background:#e6e6e6;border:1px solid #c2c2c2;box-sizing:border-box"></div><div style="position:absolute;left:673.80px;top:846.20px;width:20.40px;height:19.50px;background:linear-gradient(90deg,#fdfdfd,#efefef);border:1px solid #c2c2c2;box-sizing:border-box"></div><div style="position:absolute;left:673.80px;top:1129.30px;width:20.40px;height:19.50px;background:linear-gradient(90deg,#fdfdfd,#efefef);border:1px solid #c2c2c2;box-sizing:border-box"></div><div style="position:absolute;left:673.80px;top:865.60px;width:20.40px;height:37.60px;background:linear-gradient(90deg,#fefefe,#f0f0f0);border:1px solid #c2c2c2;box-sizing:border-box"></div><svg style="position:absolute;left:0;top:0;overflow:visible" width="1" height="1"><polygon points="678.5,859.5 689.5,859.5 684,853.5" fill="#555"/><polygon points="678.5,1135.8 689.5,1135.8 684,1141.8" fill="#555"/></svg><div style="position:absolute;left:702.80px;top:846.20px;width:464.40px;height:302.60px;background:#fff;border:1px solid #b9b9b9;box-sizing:border-box"></div><svg style="position:absolute;left:714.1px;top:883.4px;overflow:visible" width="441.70" height="220.85" viewBox="-180 -90 360 180" preserveAspectRatio="none"><path d="M-168.0 -65.5 L-165.0 -68.5 L-161.0 -70.5 L-156.0 -71.3 L-150.0 -70.4 L-141.0 -69.7 L-134.0 -69.5 L-128.0 -70.2 L-121.0 -69.4 L-114.0 -68.3 L-108.0 -68.3 L-100.0 -67.8 L-96.0 -69.5 L-93.0 -71.5 L-86.0 -69.5 L-82.0 -68.5 L-81.0 -66.0 L-86.0 -64.5 L-90.0 -63.5 L-94.0 -60.0 L-93.0 -57.5 L-89.0 -56.5 L-84.0 -55.2 L-82.0 -53.0 L-79.5 -51.5 L-78.5 -54.5 L-77.0 -58.5 L-78.0 -60.5 L-73.0 -62.0 L-69.5 -60.5 L-65.0 -60.2 L-62.0 -57.0 L-57.0 -53.0 L-55.7 -51.5 L-60.0 -48.5 L-66.0 -49.2 L-64.5 -46.5 L-61.0 -45.5 L-66.0 -44.5 L-70.0 -43.5 L-70.5 -41.8 L-74.0 -40.5 L-75.8 -38.0 L-76.0 -35.5 L-78.5 -33.8 L-81.0 -31.5 L-80.0 -27.0 L-80.5 -25.2 L-82.0 -26.5 L-83.0 -29.5 L-85.5 -30.0 L-89.5 -30.2 L-94.0 -29.6 L-97.3 -27.5 L-97.5 -22.5 L-95.8 -18.8 L-91.5 -18.5 L-90.5 -21.0 L-87.0 -21.5 L-88.0 -18.0 L-88.5 -16.0 L-84.0 -15.8 L-83.3 -12.0 L-81.5 -9.0 L-79.0 -9.5 L-77.3 -8.7 L-78.5 -7.3 L-80.5 -7.2 L-85.0 -9.5 L-86.0 -11.2 L-87.7 -13.0 L-91.5 -14.0 L-94.5 -16.0 L-97.0 -15.8 L-101.5 -17.5 L-105.3 -20.5 L-105.7 -23.0 L-109.5 -25.5 L-112.2 -29.0 L-114.5 -31.2 L-112.5 -27.0 L-110.3 -23.5 L-109.4 -23.2 L-112.0 -26.0 L-114.5 -28.0 L-115.7 -30.5 L-117.2 -32.6 L-120.6 -34.6 L-122.5 -37.5 L-124.0 -40.3 L-124.4 -43.0 L-124.0 -46.3 L-124.7 -48.4 L-123.0 -49.0 L-126.5 -50.5 L-130.5 -54.5 L-133.0 -57.5 L-137.0 -59.0 L-140.5 -59.8 L-146.0 -60.8 L-151.5 -59.2 L-154.0 -57.2 L-158.0 -55.8 L-163.0 -54.8 L-160.0 -57.5 L-157.5 -58.7 L-162.0 -59.5 L-165.0 -61.0 L-166.0 -62.5 L-163.0 -63.5 L-161.0 -64.4 L-165.5 -64.6 L-168.0 -65.5 Z M-73.0 -78.3 L-66.0 -80.0 L-60.0 -81.8 L-46.0 -82.6 L-32.0 -83.5 L-22.0 -82.6 L-17.5 -80.5 L-19.0 -77.0 L-20.0 -74.0 L-22.0 -71.0 L-25.0 -69.5 L-32.0 -68.0 L-39.0 -65.6 L-43.0 -60.0 L-47.0 -60.8 L-50.0 -62.8 L-52.0 -65.0 L-54.0 -67.5 L-55.0 -70.5 L-54.5 -72.5 L-58.0 -75.5 L-66.0 -76.2 L-73.0 -78.3 Z M-90.0 -71.0 L-88.0 -73.5 L-81.0 -73.7 L-76.0 -72.5 L-70.0 -70.5 L-67.5 -69.5 L-66.0 -67.5 L-62.0 -66.5 L-63.5 -64.5 L-65.0 -62.5 L-67.0 -62.0 L-70.0 -62.8 L-72.0 -63.5 L-74.5 -64.5 L-78.0 -64.3 L-76.0 -66.5 L-73.0 -68.0 L-75.0 -69.3 L-80.0 -69.8 L-85.0 -70.0 L-88.0 -70.2 Z M-90.0 -76.8 L-84.0 -77.0 L-78.0 -77.5 L-75.0 -79.0 L-70.0 -80.3 L-62.0 -81.5 L-62.5 -82.5 L-70.0 -83.1 L-82.0 -83.0 L-90.0 -81.5 L-92.0 -80.2 L-96.0 -79.5 L-89.0 -77.8 Z M-118.5 -69.2 L-113.0 -68.5 L-107.0 -68.7 L-101.5 -68.2 L-100.6 -69.6 L-103.0 -70.5 L-105.0 -72.9 L-109.0 -73.0 L-112.0 -72.6 L-117.5 -72.8 L-118.0 -71.0 L-115.0 -70.5 Z M-125.5 -71.9 L-123.0 -71.0 L-120.0 -71.5 L-117.5 -73.3 L-120.0 -74.3 L-124.5 -74.3 L-125.5 -72.5 Z M-117.0 -74.5 L-114.0 -74.7 L-106.0 -75.0 L-105.0 -76.0 L-110.0 -76.5 L-116.0 -76.4 L-118.0 -75.5 Z M-92.0 -74.9 L-88.0 -74.5 L-80.5 -74.6 L-80.0 -76.0 L-84.0 -76.5 L-89.5 -76.6 L-92.0 -75.8 Z M-101.0 -71.5 L-97.5 -71.0 L-96.5 -72.5 L-98.5 -74.0 L-102.0 -73.0 Z M-95.5 -72.0 L-90.5 -72.2 L-90.5 -74.0 L-95.0 -73.8 Z M-96.0 -77.8 L-92.0 -78.0 L-90.5 -80.5 L-93.5 -81.4 L-97.0 -80.5 Z M-104.0 -75.0 L-98.0 -74.8 L-97.0 -76.5 L-101.0 -76.3 Z M-122.0 -76.0 L-116.0 -77.0 L-117.5 -76.2 Z M-164.0 -54.0 L-170.0 -52.8 L-176.0 -51.8 L-180.0 -51.5 L-180.0 -52.0 L-176.0 -52.3 L-170.0 -53.3 L-164.5 -54.5 Z M-77.3 -8.7 L-75.0 -10.8 L-72.0 -12.2 L-69.5 -11.5 L-64.0 -10.6 L-61.5 -10.5 L-59.5 -8.2 L-57.0 -6.0 L-53.0 -5.5 L-51.0 -4.0 L-50.0 -1.5 L-48.5 1.0 L-44.5 2.5 L-39.5 3.0 L-35.2 5.5 L-35.0 9.0 L-37.5 12.5 L-39.0 17.5 L-40.5 21.5 L-44.0 23.0 L-48.0 25.5 L-48.5 28.5 L-52.0 32.0 L-53.5 34.0 L-58.2 34.5 L-57.0 36.5 L-58.0 38.5 L-62.0 39.0 L-62.3 40.8 L-65.0 41.5 L-64.5 42.8 L-65.5 45.0 L-67.3 46.5 L-66.0 48.0 L-68.5 50.0 L-69.2 52.2 L-68.3 53.5 L-66.5 55.0 L-70.0 55.2 L-73.0 53.5 L-75.0 51.5 L-75.5 47.5 L-74.0 43.5 L-73.5 39.0 L-72.5 35.5 L-71.5 30.0 L-71.2 25.0 L-70.2 20.0 L-71.5 17.5 L-76.0 14.0 L-78.2 10.0 L-80.0 7.0 L-81.2 5.0 L-80.0 3.0 L-80.9 1.0 L-80.0 -1.0 L-78.7 -2.0 L-77.5 -4.0 L-77.3 -6.5 L-77.3 -8.7 Z M-9.3 -37.0 L-8.8 -41.0 L-9.2 -43.2 L-7.0 -43.6 L-1.8 -43.4 L-1.2 -45.0 L-1.2 -46.3 L-2.6 -47.5 L-4.6 -48.0 L-1.7 -48.7 L0.5 -49.6 L1.8 -50.9 L4.0 -51.5 L5.0 -53.0 L8.0 -53.6 L8.8 -55.0 L8.0 -56.8 L10.5 -57.6 L10.5 -56.0 L12.5 -55.5 L11.5 -54.3 L14.0 -54.0 L18.5 -54.7 L21.2 -55.2 L21.0 -57.0 L21.6 -57.5 L23.5 -58.9 L24.0 -59.5 L28.5 -59.8 L23.0 -60.0 L21.5 -61.0 L21.4 -63.2 L25.2 -65.0 L24.0 -65.9 L22.0 -65.5 L17.8 -62.5 L17.3 -61.0 L19.0 -59.8 L16.5 -57.0 L15.9 -56.1 L13.3 -55.4 L12.5 -56.5 L11.0 -59.1 L8.0 -58.1 L5.5 -59.0 L5.0 -61.8 L7.0 -62.8 L10.5 -64.5 L14.0 -66.8 L15.6 -68.5 L19.0 -69.8 L23.0 -70.3 L28.0 -71.0 L31.0 -70.0 L41.0 -67.5 L40.5 -66.0 L35.0 -66.5 L37.5 -65.0 L41.0 -64.3 L44.0 -66.0 L44.0 -68.5 L53.5 -68.5 L58.0 -68.8 L60.0 -69.5 L65.0 -69.3 L68.5 -68.2 L67.0 -71.0 L68.7 -72.8 L72.5 -72.8 L72.0 -71.0 L75.0 -72.5 L78.0 -72.3 L80.0 -73.5 L86.5 -74.0 L87.0 -75.0 L95.0 -76.0 L101.0 -76.8 L104.0 -77.7 L108.0 -76.6 L113.0 -75.8 L113.5 -73.3 L119.0 -73.2 L128.0 -72.5 L129.5 -71.0 L135.0 -71.6 L140.0 -72.4 L146.0 -72.3 L151.0 -71.5 L159.5 -70.7 L160.5 -69.5 L167.0 -69.6 L170.5 -70.1 L176.0 -69.8 L180.0 -68.8 L180.0 -65.5 L178.0 -64.5 L178.5 -62.5 L174.0 -61.8 L170.0 -60.0 L164.8 -59.8 L163.0 -58.0 L162.0 -56.2 L161.8 -54.5 L156.8 -51.0 L155.8 -56.0 L157.5 -57.8 L160.0 -59.5 L160.5 -61.3 L157.0 -61.5 L154.0 -59.6 L151.0 -59.2 L148.5 -59.3 L143.0 -59.3 L138.0 -56.3 L135.2 -54.7 L137.0 -54.0 L139.8 -54.0 L141.3 -53.0 L140.5 -49.5 L140.0 -48.0 L137.0 -45.5 L133.2 -42.8 L130.7 -42.4 L129.7 -41.0 L128.0 -40.0 L129.4 -37.5 L129.3 -35.2 L126.5 -34.4 L126.3 -37.0 L125.0 -37.8 L124.7 -39.7 L121.6 -39.4 L121.5 -40.9 L119.0 -39.2 L117.5 -38.8 L118.5 -37.4 L121.0 -37.5 L122.5 -36.9 L120.6 -36.1 L119.6 -34.3 L120.9 -32.0 L121.9 -30.9 L121.5 -28.3 L119.6 -25.7 L117.0 -23.6 L114.0 -22.3 L110.5 -21.2 L109.9 -20.3 L108.5 -21.7 L106.7 -20.5 L105.9 -18.9 L108.8 -15.5 L109.3 -11.8 L107.7 -10.3 L105.0 -8.7 L104.8 -10.3 L102.6 -12.2 L100.9 -12.7 L100.0 -12.3 L99.2 -9.2 L100.3 -7.4 L101.2 -6.8 L103.4 -4.8 L103.5 -1.4 L101.3 -2.8 L100.2 -5.5 L98.3 -7.8 L98.5 -12.5 L97.6 -16.1 L94.3 -16.2 L94.5 -19.0 L92.4 -20.7 L91.5 -22.6 L88.8 -21.7 L86.5 -20.2 L84.5 -18.8 L82.2 -16.6 L80.3 -15.9 L80.1 -13.5 L79.9 -10.3 L78.1 -8.8 L77.1 -8.3 L76.0 -10.5 L74.8 -13.0 L73.0 -17.4 L72.8 -21.5 L70.5 -20.8 L69.0 -22.4 L70.0 -23.0 L68.2 -23.7 L66.5 -25.4 L61.5 -25.1 L57.4 -25.7 L56.4 -27.1 L54.7 -26.5 L51.5 -27.9 L50.1 -30.2 L48.0 -30.0 L48.0 -29.0 L48.8 -27.7 L50.2 -26.7 L50.8 -24.8 L51.6 -24.2 L52.6 -24.2 L54.0 -24.1 L56.1 -26.3 L56.4 -24.9 L57.4 -23.9 L58.7 -23.6 L59.8 -22.5 L58.5 -20.5 L57.8 -19.1 L56.6 -18.6 L55.3 -17.6 L52.4 -16.4 L48.6 -14.0 L43.5 -12.6 L42.6 -15.6 L40.9 -19.5 L39.1 -21.3 L38.5 -23.7 L35.5 -27.9 L34.6 -28.1 L34.9 -29.5 L34.2 -31.2 L34.6 -31.5 L35.6 -34.4 L36.0 -36.8 L32.5 -36.1 L30.6 -36.7 L28.7 -36.7 L27.6 -37.7 L26.3 -38.2 L26.8 -39.0 L26.2 -39.5 L27.3 -40.4 L29.0 -41.0 L28.8 -41.5 L27.5 -42.1 L26.1 -41.0 L24.5 -40.8 L23.0 -40.4 L22.5 -40.0 L23.3 -39.2 L23.9 -37.7 L22.8 -36.5 L21.3 -37.6 L21.0 -39.5 L19.4 -41.8 L18.4 -42.5 L15.2 -44.2 L13.6 -45.2 L12.3 -45.0 L12.5 -44.0 L13.8 -42.8 L16.0 -41.4 L17.5 -40.9 L18.4 -40.2 L16.6 -38.8 L15.6 -38.2 L16.1 -39.7 L14.0 -41.2 L12.1 -41.7 L10.2 -43.9 L8.9 -44.4 L6.5 -43.1 L4.5 -43.4 L3.1 -43.1 L3.2 -41.9 L0.8 -41.0 L-0.7 -39.5 L0.1 -38.7 L-0.7 -37.6 L-2.1 -36.7 L-4.4 -36.7 L-5.4 -36.0 L-6.5 -36.9 L-7.5 -37.1 L-9.3 -37.0 Z M-17.0 -21.0 L-17.1 -19.0 L-16.3 -16.5 L-17.5 -14.7 L-16.7 -12.4 L-15.1 -11.0 L-13.2 -9.0 L-11.4 -6.8 L-7.5 -4.4 L-4.0 -5.2 L-1.9 -4.7 L1.9 -6.1 L4.3 -6.3 L6.4 -4.3 L8.5 -4.8 L9.5 -3.5 L9.8 -1.0 L9.3 1.0 L11.0 3.7 L12.3 6.1 L13.2 9.0 L13.7 11.3 L12.5 13.5 L11.8 16.3 L12.2 19.5 L13.9 21.7 L14.7 25.4 L15.5 27.4 L17.0 30.0 L18.2 32.4 L18.4 34.0 L20.0 34.8 L22.6 33.9 L25.8 33.7 L28.0 32.5 L29.9 31.3 L31.5 29.3 L32.7 26.1 L32.9 24.0 L35.4 23.5 L35.5 21.3 L34.8 19.8 L36.8 17.5 L39.2 15.7 L40.5 12.5 L40.4 10.2 L39.2 8.2 L38.8 6.5 L39.7 4.9 L40.6 2.5 L41.6 1.6 L43.1 -0.3 L46.0 -2.8 L48.0 -5.0 L49.5 -7.8 L51.0 -10.6 L51.1 -12.0 L48.9 -11.4 L45.6 -10.7 L43.5 -11.3 L42.8 -12.2 L42.5 -13.5 L41.2 -14.6 L39.3 -15.9 L38.5 -18.0 L37.5 -18.6 L36.9 -21.0 L35.5 -23.1 L35.5 -24.0 L34.0 -26.5 L33.5 -28.5 L32.5 -29.9 L32.2 -31.3 L30.0 -31.5 L28.9 -30.9 L25.0 -31.8 L23.0 -32.6 L21.5 -32.8 L20.0 -31.9 L19.5 -30.4 L18.0 -30.8 L15.7 -31.4 L15.2 -32.3 L13.1 -32.9 L11.5 -33.1 L10.3 -33.8 L10.9 -35.1 L10.8 -36.9 L9.5 -37.3 L8.4 -36.9 L5.3 -36.7 L3.2 -36.8 L0.5 -36.3 L-2.2 -35.2 L-5.9 -35.8 L-6.9 -34.1 L-9.6 -32.2 L-9.8 -29.9 L-11.7 -28.1 L-13.1 -27.6 L-14.4 -26.3 L-14.8 -24.7 L-16.0 -23.7 L-17.0 -21.0 Z M44.3 25.0 L43.3 22.0 L44.4 18.5 L44.0 16.5 L46.3 15.7 L47.7 14.6 L49.2 12.0 L50.5 15.2 L49.5 17.7 L48.5 20.5 L47.5 24.0 L45.5 25.5 Z M113.3 22.5 L114.2 21.5 L116.7 20.6 L121.0 19.5 L122.2 18.0 L123.4 16.7 L125.9 14.3 L127.3 14.0 L129.6 14.9 L130.6 12.5 L132.6 11.6 L135.9 11.9 L136.9 12.3 L135.5 14.8 L137.1 16.0 L140.2 17.7 L141.3 16.4 L141.7 12.4 L142.5 10.7 L143.6 12.8 L144.6 14.2 L145.4 16.3 L146.1 18.6 L148.8 20.4 L150.7 22.4 L153.0 25.3 L153.5 28.9 L153.0 31.0 L151.7 33.0 L150.3 35.7 L149.9 37.4 L147.4 38.2 L144.9 37.7 L143.6 38.8 L140.6 38.0 L139.6 36.1 L137.7 35.1 L136.8 35.3 L137.9 33.5 L137.5 33.6 L135.6 34.4 L134.3 32.6 L131.3 31.5 L127.1 32.3 L124.0 33.5 L121.3 33.8 L117.9 35.1 L115.0 34.2 L115.0 31.6 L114.5 28.5 L113.4 26.1 L113.3 22.5 Z M144.7 40.7 L148.3 40.9 L148.0 43.2 L146.4 43.6 L145.1 42.3 Z M172.6 34.5 L174.3 35.3 L175.9 37.2 L178.5 37.7 L177.8 39.2 L176.7 40.1 L175.2 41.7 L174.6 41.3 L175.2 39.4 L173.8 39.2 L174.6 37.6 L173.0 35.4 Z M172.8 40.5 L174.3 41.4 L173.4 42.8 L171.4 44.3 L170.6 45.9 L169.3 46.6 L166.7 46.2 L168.3 44.1 L170.6 43.0 L172.1 41.4 Z M-5.7 -50.0 L-3.0 -50.6 L1.4 -51.2 L1.7 -52.7 L0.3 -53.4 L-0.5 -54.5 L-1.8 -55.6 L-3.5 -56.0 L-1.8 -57.5 L-3.0 -58.6 L-5.0 -58.6 L-6.2 -56.8 L-5.6 -55.3 L-4.8 -54.8 L-3.2 -54.3 L-3.4 -53.4 L-4.6 -53.1 L-5.0 -51.6 L-3.0 -51.4 L-5.7 -50.0 Z M-10.0 -51.6 L-6.2 -52.2 L-6.0 -53.8 L-5.6 -54.6 L-7.6 -55.2 L-10.1 -54.2 L-9.5 -53.0 Z M-24.3 -65.6 L-22.0 -66.4 L-18.7 -66.2 L-15.5 -66.5 L-13.5 -65.1 L-14.5 -64.4 L-18.7 -63.4 L-22.7 -63.9 L-21.8 -64.6 Z M130.0 -31.2 L131.3 -31.4 L132.2 -33.9 L135.1 -34.6 L135.8 -33.5 L137.2 -34.6 L139.9 -34.8 L140.8 -35.8 L141.9 -39.2 L141.4 -41.4 L140.0 -41.5 L139.8 -40.3 L140.0 -38.5 L138.5 -37.3 L136.8 -37.3 L135.5 -35.5 L133.0 -35.4 L131.4 -34.4 L130.9 -33.9 L129.8 -33.2 Z M139.9 -41.6 L141.3 -41.4 L143.2 -42.0 L145.5 -43.3 L144.0 -44.1 L141.9 -45.5 L141.6 -44.4 L141.0 -43.2 L140.3 -43.3 Z M142.0 -46.0 L143.5 -46.5 L143.0 -49.5 L144.5 -49.0 L143.0 -54.0 L142.6 -54.3 L142.0 -51.0 L142.1 -48.0 Z M95.3 -5.5 L97.5 -5.2 L100.6 -2.1 L103.9 1.0 L106.0 3.2 L105.8 5.9 L104.3 5.6 L102.5 4.2 L100.3 1.0 L98.6 -1.8 L96.4 -3.9 Z M105.3 6.8 L108.6 6.8 L111.5 6.4 L114.6 7.8 L114.4 8.7 L110.5 8.1 L106.5 7.4 Z M109.7 -1.9 L111.2 -2.7 L113.0 -3.2 L115.5 -5.4 L117.9 -6.6 L119.0 -5.4 L117.9 -4.1 L117.5 -2.5 L118.9 -0.9 L117.5 -0.1 L116.6 2.5 L116.0 3.7 L114.8 4.1 L113.3 3.1 L110.2 2.9 L109.6 0.5 L108.9 -0.4 Z M119.0 -0.9 L120.9 -1.3 L123.0 -0.9 L124.9 -1.6 L120.5 -0.4 L121.5 0.9 L123.3 0.6 L122.6 4.7 L121.5 4.6 L120.9 2.6 L120.3 5.5 L119.4 5.4 L119.5 3.5 L118.8 2.8 L119.8 -0.2 Z M131.0 1.4 L134.1 1.0 L135.9 2.8 L137.4 1.5 L141.0 2.6 L144.6 3.9 L146.0 5.5 L147.6 6.1 L147.9 8.0 L150.0 10.3 L148.0 10.3 L146.0 8.1 L143.3 8.2 L143.0 9.1 L141.0 9.1 L139.1 8.1 L138.1 8.3 L137.6 5.4 L135.2 4.5 L133.0 4.1 L132.0 2.8 L133.7 2.2 Z M120.3 -18.5 L122.5 -18.5 L122.0 -16.5 L121.6 -14.4 L124.2 -13.8 L123.9 -12.2 L126.0 -9.3 L126.4 -6.8 L125.4 -5.6 L124.0 -6.9 L122.0 -7.0 L122.8 -9.0 L121.2 -13.6 L120.6 -15.0 L119.9 -16.4 Z M120.1 -23.1 L121.5 -25.3 L122.0 -24.5 L120.8 -22.0 Z M79.9 -6.8 L80.3 -9.8 L81.9 -7.5 L81.2 -6.2 Z M-85.0 -21.9 L-81.5 -23.1 L-77.1 -22.1 L-74.2 -20.3 L-77.5 -19.9 L-78.5 -21.6 L-82.0 -22.0 L-84.9 -21.3 Z M-74.4 -19.8 L-71.0 -19.9 L-68.4 -18.6 L-71.3 -17.6 L-74.4 -18.3 Z M11.0 -78.5 L17.0 -80.0 L22.0 -80.4 L27.0 -80.0 L25.0 -78.0 L21.0 -77.0 L16.0 -76.6 L14.0 -77.3 Z M52.0 -71.5 L56.0 -74.5 L62.0 -76.0 L68.5 -76.8 L66.0 -75.8 L58.0 -74.0 L55.0 -72.5 L57.0 -70.6 L54.0 -70.8 Z M92.0 -79.5 L99.0 -81.0 L104.0 -79.0 L98.0 -78.5 Z M137.0 -75.0 L142.0 -75.5 L149.0 -75.5 L144.0 -74.0 Z M-180.0 -71.0 L-177.0 -71.5 L-178.0 -70.8 Z M-180.0 -68.8 L-176.0 -67.8 L-172.0 -66.3 L-170.5 -66.2 L-173.0 -64.8 L-177.0 -65.2 L-180.0 -65.3 Z" fill="#ebe8de" stroke="#7a7868" stroke-width="1.05" vector-effect="non-scaling-stroke" stroke-linejoin="round"/><path d="M-180.0 90.0 L180.0 90.0 L180.0 84.5 L172.0 82.5 L166.0 77.5 L170.0 72.0 L163.0 70.5 L155.0 68.8 L147.0 67.8 L140.0 66.6 L132.0 66.2 L120.0 66.7 L112.0 66.0 L103.0 65.7 L97.0 66.3 L88.0 66.8 L80.0 68.2 L72.0 70.0 L68.0 67.7 L60.0 67.3 L50.0 66.0 L40.0 68.8 L32.0 69.5 L22.0 70.3 L12.0 70.2 L4.0 70.5 L-5.0 71.2 L-12.0 72.0 L-18.0 73.8 L-27.0 75.5 L-35.0 78.0 L-46.0 77.8 L-58.0 74.5 L-61.0 71.0 L-63.0 67.0 L-57.5 63.3 L-60.0 63.6 L-66.0 66.0 L-68.0 69.5 L-73.0 72.5 L-80.0 73.2 L-90.0 72.8 L-100.0 73.8 L-110.0 74.8 L-120.0 73.8 L-130.0 74.8 L-140.0 76.0 L-148.0 77.0 L-155.0 79.0 L-162.0 81.5 L-170.0 84.3 L-180.0 84.5 Z" fill="#ebe8de" stroke="#7a7868" stroke-width="1.05" vector-effect="non-scaling-stroke"/><path d="M27.7 -42.5 L28.4 -43.8 L29.7 -45.3 L30.9 -46.5 L33.5 -46.0 L32.5 -45.3 L33.7 -44.4 L35.5 -45.1 L36.6 -45.3 L38.2 -47.1 L39.2 -47.0 L38.0 -46.0 L37.4 -44.9 L39.6 -43.5 L41.6 -42.6 L41.5 -41.5 L39.5 -41.1 L36.9 -41.3 L34.7 -41.9 L33.4 -42.0 L31.2 -41.1 L29.0 -41.3 Z M46.7 -44.6 L47.5 -45.6 L49.1 -46.4 L51.2 -47.1 L53.1 -46.8 L53.0 -45.3 L51.3 -44.6 L50.8 -44.0 L52.7 -41.5 L54.0 -40.8 L53.8 -39.2 L53.9 -37.2 L51.5 -36.8 L50.1 -37.4 L49.0 -38.5 L48.9 -41.8 L47.5 -42.9 Z" fill="#fff" stroke="#7a7868" stroke-width="1.0" vector-effect="non-scaling-stroke"/><path d="M-94.5 -59.0 L-93.0 -57.5 L-89.0 -56.5 L-84.5 -55.2 L-82.3 -53.0 L-79.5 -51.5 L-78.5 -54.5 L-77.0 -58.5 L-78.0 -60.5 L-78.0 -62.3 L-82.0 -63.5 L-86.0 -63.8 L-90.0 -63.0 L-94.0 -61.0 Z M-86.0 -66.0 L-81.5 -66.0 L-80.0 -68.5 L-84.0 -69.5 L-86.0 -68.0 Z" fill="#fff" stroke="#7a7868" stroke-width="1.0" vector-effect="non-scaling-stroke"/><path d="M-86.5 -63.5 L-80.0 -63.8 L-82.0 -65.8 L-86.0 -66.2 L-87.0 -65.0 Z" fill="#ebe8de" stroke="#7a7868" stroke-width="1.0" vector-effect="non-scaling-stroke"/><path d="M-141.0 -69.7 L-141.0 -60.3 M-123.0 -49.0 L-95.0 -49.0 L-89.0 -48.0 L-83.0 -46.0 L-82.5 -42.0 L-79.0 -43.3 L-75.0 -45.0 L-71.0 -45.3 L-67.8 -47.1 M-117.1 -32.5 L-111.0 -31.3 L-106.5 -31.8 L-103.0 -29.0 L-97.5 -25.9 M-92.0 -14.5 L-89.0 -17.8 L-88.0 -21.0 M-80.0 2.0 L-75.0 1.0 L-70.0 4.0 L-73.0 12.0 L-69.0 15.0 L-69.0 22.0 L-68.0 26.0 L-71.0 42.0 L-72.0 51.0 M-72.0 -12.0 L-67.0 -6.0 L-70.0 -2.0 L-69.0 4.0 M-60.0 -5.0 L-62.0 -2.0 L-69.0 -2.0 M-58.0 20.0 L-62.0 22.0 L-67.0 22.0 M-58.0 34.0 L-58.0 28.0 L-54.0 26.0 L-55.0 23.0 L-58.0 20.0 L-61.0 13.0 L-66.0 10.0 L-72.0 10.0 M-8.5 -27.7 L-5.0 -24.0 L4.0 -19.0 L4.0 -13.0 L12.0 -13.0 L14.0 -13.0 L15.0 -8.0 L16.0 -3.0 L18.0 -3.0 L22.0 -5.0 L27.0 -5.0 L31.0 -3.0 L35.0 -4.0 L42.0 -3.0 L44.0 -5.0 L48.0 -8.0 M-13.0 -27.7 L-8.5 -27.7 L-1.0 -32.0 L9.0 -30.0 L10.0 -25.0 L12.0 -23.0 L15.0 -23.0 L24.0 -20.0 L24.0 -22.0 L36.0 -22.0 M15.0 -23.0 L16.0 -21.0 L24.0 -15.0 L22.0 -12.0 L24.0 -8.0 L27.0 -5.0 M24.0 -22.0 L24.0 -30.0 L25.0 -32.0 M36.0 -22.0 L34.0 -10.0 L33.0 -4.0 M9.0 -4.0 L14.0 -2.0 L18.0 4.0 L12.0 5.0 M12.0 17.0 L20.0 18.0 L25.0 18.0 L29.0 16.0 L30.0 11.0 L32.0 9.0 L40.0 10.0 M21.0 5.0 L30.0 5.0 L30.0 1.0 L35.0 -2.0 L39.0 5.0 M20.0 18.0 L20.0 23.0 L25.0 25.0 L32.0 26.0 M17.0 29.0 L20.0 25.0 L26.0 23.0 M-12.0 -12.0 L-5.0 -15.0 L1.0 -15.0 L4.0 -12.0 M-5.0 -5.0 L-5.0 -10.0 L-11.0 -10.0 M3.0 -13.0 L4.0 -7.0 L2.0 -6.0 M8.0 -5.0 L11.0 -7.0 L14.0 -12.0 M24.0 -8.0 L16.0 -8.0 L14.0 -12.0 M38.0 -13.0 L40.0 -11.0 L42.0 -12.0 M33.0 25.0 L32.0 22.0 L35.0 17.0 M21.0 33.0 L22.0 25.0 M28.0 -55.0 L32.0 -52.0 L40.0 -48.0 L48.0 -42.0 L50.0 -48.0 L58.0 -50.0 L62.0 -55.0 L75.0 -55.0 L88.0 -50.0 L98.0 -52.0 L113.0 -50.0 L120.0 -53.0 L127.0 -50.0 L131.0 -43.0 M62.0 -35.0 L68.0 -37.0 L75.0 -37.0 L80.0 -35.0 L88.0 -28.0 L97.0 -28.0 L98.0 -24.0 L93.0 -22.0 M88.0 -50.0 L90.0 -45.0 L96.0 -43.0 L106.0 -42.0 L112.0 -45.0 L116.0 -48.0 L120.0 -46.0 L123.0 -53.0 M75.0 -37.0 L78.0 -42.0 L80.0 -45.0 L83.0 -47.0 L88.0 -50.0 M46.0 -37.0 L53.0 -37.0 L61.0 -36.0 L67.0 -38.0 L75.0 -40.0 L80.0 -45.0 M44.0 -39.0 L48.0 -38.0 L53.0 -40.0 M35.0 -36.0 L38.0 -37.0 L42.0 -37.0 L44.0 -35.0 L48.0 -30.0 M35.0 -32.0 L39.0 -32.0 L44.0 -29.0 L47.0 -29.0 M39.0 -32.0 L42.0 -33.0 L45.0 -34.0 M44.0 -37.0 L44.0 -40.0 L43.0 -42.0 L48.0 -42.0 M52.0 -17.0 L55.0 -20.0 L55.0 -22.0 L52.0 -23.0 M38.0 -18.0 L43.0 -17.0 L46.0 -17.0 L52.0 -19.0 M44.0 -13.0 L47.0 -16.0 L55.0 -17.0 M61.0 -25.0 L63.0 -30.0 L61.0 -36.0 M66.0 -25.0 L70.0 -30.0 L74.0 -34.0 L75.0 -37.0 M88.0 -27.0 L88.0 -22.0 M92.0 -26.0 L96.0 -28.0 M98.0 -24.0 L101.0 -21.0 L104.0 -22.0 L107.0 -22.0 M100.0 -14.0 L104.0 -14.0 L106.0 -11.0 M101.0 -18.0 L104.0 -18.0 L106.0 -15.0 M102.0 -6.0 L101.0 -6.5 M124.0 -40.0 L127.0 -42.0 L130.0 -42.5 M126.0 -38.0 L129.0 -38.5 M2.0 -51.0 L6.0 -49.5 L8.0 -48.0 L7.0 -44.0 L3.0 -43.0 L-2.0 -43.0 M-7.0 -42.0 L-7.0 -38.0 M6.0 -49.5 L6.0 -53.0 L7.0 -54.0 M8.0 -48.0 L10.0 -47.0 L13.0 -47.0 L15.0 -46.0 L13.5 -45.5 M7.0 -44.0 L8.0 -46.0 L10.0 -46.5 L13.0 -46.5 M10.0 -47.0 L10.0 -55.0 M13.0 -47.0 L14.5 -51.0 L15.0 -54.0 M15.0 -51.0 L19.0 -50.0 L23.0 -50.0 L24.0 -54.0 M17.0 -48.0 L22.0 -48.0 L26.0 -48.0 L28.0 -45.5 M16.0 -46.5 L18.0 -46.0 L23.0 -45.5 L22.0 -44.0 L20.0 -42.0 L22.0 -41.0 M23.0 -44.0 L28.0 -44.0 L28.0 -41.5 M19.0 -50.0 L17.0 -48.0 L16.0 -46.5 M23.0 -50.0 L24.0 -52.0 L28.0 -53.0 L32.0 -52.0 M24.0 -54.0 L27.0 -56.0 L28.0 -59.5 M22.0 -57.5 L26.0 -56.0 L28.0 -56.5 M22.0 -55.0 L26.0 -55.0 L26.0 -57.0 M26.0 -48.0 L28.0 -48.5 L30.0 -46.5 M28.0 -70.0 L30.0 -67.0 L29.0 -62.0 L28.0 -60.0 M12.0 -69.0 L14.0 -66.0 L12.0 -62.0 L12.0 -59.0 M22.0 -69.0 L22.0 -66.0 M-8.0 -42.0 L-8.0 -39.0 L-7.0 -37.0" fill="none" stroke="#7a7868" stroke-width="0.95" vector-effect="non-scaling-stroke"/></svg><svg style="position:absolute;left:0;top:0;overflow:visible" width="1" height="1"><path d="M1038.6 932 L1054.8 932 M1046.7 923.9 L1046.7 940.1" stroke="#b65bd8" stroke-width="3.6"/><path d="M987.5 975.5 L1016 959" stroke="#ff0000" stroke-width="4.2" stroke-linecap="round"/><path d="M1033.2 946.4 L1012.5 951.2 L1020.5 963.2 Z" fill="#ff0000"/></svg><div style="position:absolute;left:715.30px;top:1174.20px;width:110.70px;height:29.00px;border:1px solid #3c9bf0;background:linear-gradient(180deg,#f4f8fc,#e3e9f0);border-radius:3px;box-sizing:border-box"></div><div class="t" style="left:760.00px;top:1179.70px;font-size:15px;transform:scaleX(0.8907);transform-origin:0.00px 0;">OK</div><div style="position:absolute;left:834.40px;top:1174.20px;width:110.40px;height:29.00px;border:1px solid #adadad;background:linear-gradient(180deg,#fbfbfb,#ececec);border-radius:3px;box-sizing:border-box"></div><div class="t" style="left:862.10px;top:1179.70px;font-size:15px;transform:scaleX(0.9637);transform-origin:0.00px 0;">Отмена</div><div style="position:absolute;left:954.30px;top:1174.20px;width:109.70px;height:29.00px;border:1px solid #adadad;background:linear-gradient(180deg,#fbfbfb,#ececec);border-radius:3px;box-sizing:border-box"></div><div class="t" style="left:967.90px;top:1179.70px;font-size:15px;transform:scaleX(0.9858);transform-origin:1.00px 0;">Применить</div><div style="position:absolute;left:1073.40px;top:1174.20px;width:110.00px;height:29.00px;border:1px solid #adadad;background:linear-gradient(180deg,#fbfbfb,#ececec);border-radius:3px;box-sizing:border-box"></div><div class="t" style="left:1096.20px;top:1179.70px;font-size:15px;transform:scaleX(0.9882);transform-origin:0.00px 0;">Справка</div>
</body></html>
